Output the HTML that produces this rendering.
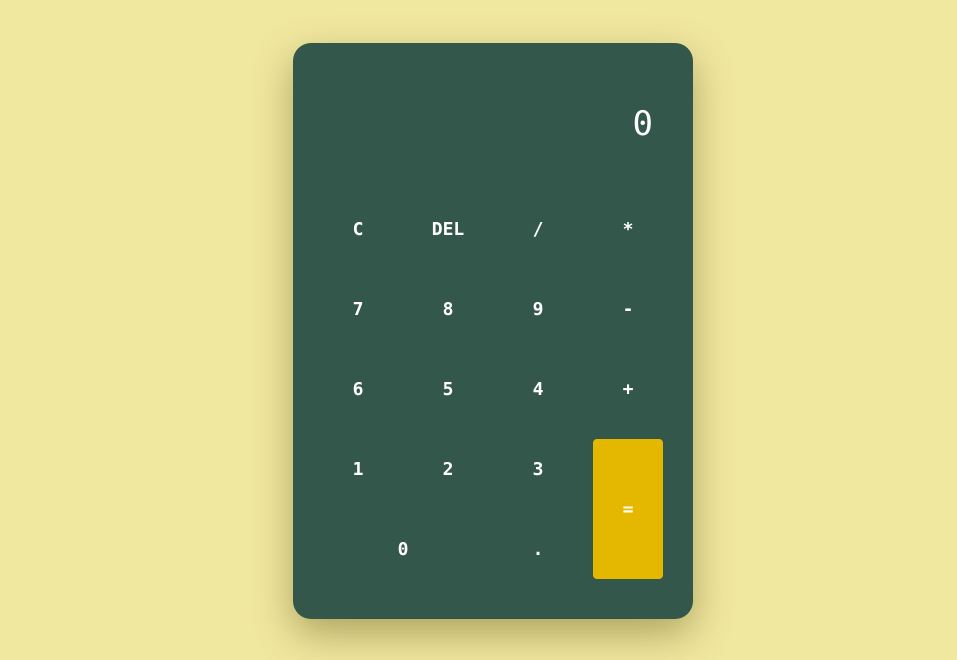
<!DOCTYPE html>
<html><head><meta charset="utf-8"><style>
html,body{margin:0;padding:0;}
body{width:957px;height:660px;background:#f1e8a0;position:relative;overflow:hidden;font-family:"DejaVu Sans Mono","Liberation Mono",monospace;}
.calc{position:absolute;left:293px;top:43px;width:400px;height:576px;background:#33574a;border-radius:18px;box-shadow:0 15px 40px rgba(90,80,20,0.45);}
.disp{position:absolute;right:40px;top:56px;color:#fff;font-size:34px;line-height:50px;}
.grid{position:absolute;left:30px;top:156px;display:grid;grid-template-columns:repeat(4,70px);grid-auto-rows:60px;column-gap:20px;row-gap:20px;}
.grid div{display:flex;align-items:center;justify-content:center;color:#fff;font-weight:bold;font-size:18px;border-radius:4px;}
.eq{background:#e5b800;grid-row:span 2;}
.z{grid-column:span 2;}
</style></head><body>
<div class="calc">
<div class="disp">0</div>
<div class="grid">
<div>C</div><div>DEL</div><div>/</div><div>*</div>
<div>7</div><div>8</div><div>9</div><div>-</div>
<div>6</div><div>5</div><div>4</div><div>+</div>
<div>1</div><div>2</div><div>3</div><div class="eq">=</div>
<div class="z">0</div><div>.</div>
</div>
</div>
</body></html>
